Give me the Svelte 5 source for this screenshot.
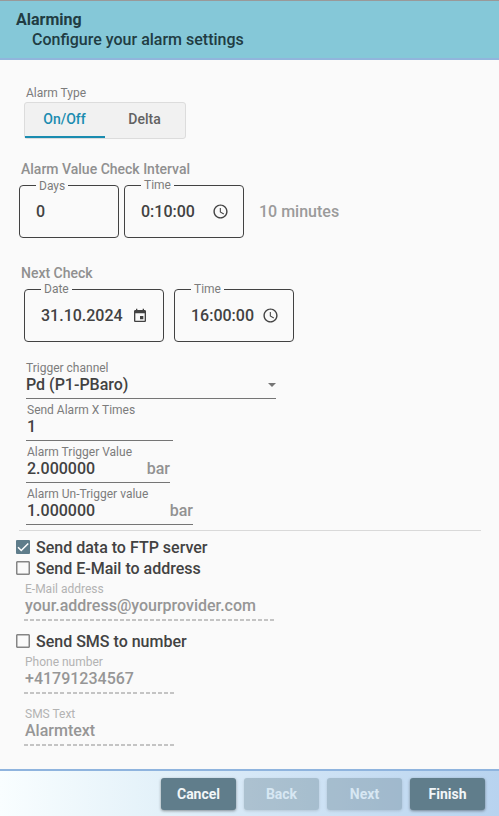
<script>
  const channelFields = [
    { label: 'Send Alarm X Times', value: '1', unit: '', size: 'short' },
    { label: 'Alarm Trigger Value', value: '2.000000', unit: 'bar', size: 'mid' },
    { label: 'Alarm Un-Trigger value', value: '1.000000', unit: 'bar', size: 'wide' }
  ];
  let alarmType = $state('On/Off');
  let ftp = $state(true);
  let mail = $state(false);
  let sms = $state(false);
</script>

{#snippet clock()}
  <svg class="icon clock" viewBox="0 0 24 24"><path d="M11.99 2C6.47 2 2 6.48 2 12s4.47 10 9.99 10C17.52 22 22 17.52 22 12S17.52 2 11.99 2zM12 20c-4.42 0-8-3.58-8-8s3.58-8 8-8 8 3.58 8 8-3.58 8-8 8zm.5-13H11v6l5.25 3.15.75-1.23-4.5-2.67z" /></svg>
{/snippet}

{#snippet check(on, text, toggle)}
  <button class="check" role="checkbox" aria-checked={on} onclick={toggle}>
    <span class="box" class:on>
      {#if on}<svg viewBox="0 0 24 24"><path fill="none" stroke="#fff" stroke-width="2.6" d="M3.5 12.5 9 18 21 6" /></svg>{/if}
    </span>
    <span class="text">{text}</span>
  </button>
{/snippet}

<div class="dialog">
  <header>
    <h1>Alarming</h1>
    <p>Configure your alarm settings</p>
  </header>

  <main>
    <div class="type-label">Alarm Type</div>
    <div class="tabs">
      {#each ['On/Off', 'Delta'] as name}
        <button class:active={alarmType === name} onclick={() => (alarmType = name)}>{name}</button>
      {/each}
    </div>

    <h2 class="interval">Alarm Value Check Interval</h2>
    <div class="row">
      <div class="outlined days"><span class="legend low">Days</span><span class="val">0</span></div>
      <div class="outlined time"><span class="legend">Time</span><span class="val">0:10:00</span>{@render clock()}</div>
      <span class="hint">10 minutes</span>
    </div>

    <h2 class="next">Next Check</h2>
    <div class="row dates">
      <div class="outlined date">
        <span class="legend">Date</span><span class="val">31.10.2024</span>
        <svg class="icon" viewBox="0 0 24 24"><path d="M17 12h-5v5h5v-5zM16 1v2H8V1H6v2H5c-1.11 0-1.99.9-1.99 2L3 19c0 1.1.89 2 2 2h14c1.1 0 2-.9 2-2V5c0-1.1-.9-2-2-2h-1V1h-2zm3 18H5V8h14v11z" /></svg>
      </div>
      <div class="outlined time"><span class="legend">Time</span><span class="val">16:00:00</span>{@render clock()}</div>
    </div>

    <div class="fields">
      <div class="field select">
        <span class="label">Trigger channel</span>
        <div class="line"><span>Pd (P1-PBaro)</span><i class="arrow"></i></div>
      </div>
      {#each channelFields as f}
        <div class="field num {f.size}">
          <span class="label">{f.label}</span>
          <div class="line"><span>{f.value}</span><span class="unit">{f.unit}</span></div>
        </div>
      {/each}
    </div>
    <div class="divider"></div>

    <div class="sends">
      {@render check(ftp, 'Send data to FTP server', () => (ftp = !ftp))}
      {@render check(mail, 'Send E-Mail to address', () => (mail = !mail))}
      <div class="field off email"><span class="label">E-Mail address</span><div class="line"><span>your.address@yourprovider.com</span></div></div>
      {@render check(sms, 'Send SMS to number', () => (sms = !sms))}
      <div class="field off phone"><span class="label">Phone number</span><div class="line"><span>+41791234567</span></div></div>
      <div class="field off sms"><span class="label">SMS Text</span><div class="line"><span>Alarmtext</span></div></div>
    </div>
  </main>

  <footer>
    <button>Cancel</button>
    <button disabled>Back</button>
    <button disabled>Next</button>
    <button>Finish</button>
  </footer>
</div>

<style>
  :global(body) { margin: 0; background: #fafafa; }
  .dialog, .dialog * { box-sizing: border-box; }
  .dialog {
    display: flex; flex-direction: column; width: 499px; height: 816px; overflow: hidden;
    background: #fafafa; color: #424242; font: 500 16px/20px Roboto, sans-serif;
  }
  button { font: inherit; letter-spacing: inherit; color: inherit; border: 0; margin: 0; padding: 0; background: none; }
  header { height: 60px; padding: 9px 16px 0; background: #85c8d8; border-top: 1px solid #999; border-bottom: 2px solid #91b5dc; color: #213c43; }
  h1, h2, p { margin: 0; font: inherit; }
  h1 { font-weight: 700; }
  p { padding-left: 16px; }

  main { height: 709px; padding-top: 25px; }
  .type-label { padding-left: 26px; height: 17px; font-size: 12px; font-weight: 400; line-height: 16px; color: #7c7c7c; }
  .tabs { display: flex; width: 162px; height: 37px; margin-left: 24px; border: 1px solid #dcdcdc; border-radius: 3px; background: #f1f1f1; }
  .tabs button { width: 80px; height: 35px; padding: 0 1px 1px 0; font-size: 14px; color: #626262; border-bottom: 2px solid transparent; }
  .tabs .active { color: #1a8cb0; border-bottom-color: #1a8cb0; }
  h2 { padding-left: 21px; font-size: 14px; color: #909090; }
  .interval { margin-top: 20px; height: 26px; }
  .row { display: flex; gap: 5px; margin-left: 19px; }
  .next { margin-top: 25px; height: 26px; }
  .dates { margin-left: 24px; gap: 10px; }
  .outlined { position: relative; display: flex; align-items: center; height: 53px; padding-left: 16px; border: 1px solid #424242; border-radius: 4px; }
  .days { width: 100px; }
  .time { width: 120px; }
  .date { width: 140px; }
  .legend { position: absolute; top: -8px; left: 16px; padding: 0 3px; background: #fafafa; font-size: 12px; font-weight: 400; line-height: 14px; color: #7c7c7c; }
  .low { top: -7px; }
  .icon { width: 16px; height: 16px; margin-left: auto; margin-right: 15px; fill: #424242; }
  .clock { width: 17px; height: 17px; margin-right: 14px; margin-bottom: 1px; }
  .hint { align-self: center; margin-left: 10px; color: #9b9b9b; }

  .fields { margin: 19px 0 0 26px; }
  .field { height: 42px; }
  .label { display: block; height: 16px; font-size: 12px; font-weight: 400; line-height: 14px; color: #7c7c7c; }
  .num .label, .num .line span:first-child { padding-left: 1px; }
  .line { display: flex; height: 22px; line-height: 16px; border-bottom: 1px solid #757575; }
  .unit { margin-left: auto; color: #929292; }
  .select { width: 250px; }
  .arrow { margin: 6px 0 0 auto; width: 8px; height: 4px; background: #757575; clip-path: polygon(0 0, 100% 0, 50% 100%); }
  .short { width: 147px; }
  .mid { width: 144px; }
  .wide { width: 167px; }
  .divider { width: 462px; height: 1px; margin: 1px 0 0 19px; background: #d9d9d9; }

  .sends { padding-top: 6px; }
  .check { display: flex; align-items: center; gap: 6px; height: 21px; margin-left: 16px; }
  .box { width: 14px; height: 14px; margin-bottom: 1px; border: 1.5px solid #858585; border-radius: 1px; box-shadow: inset 0 0 0 .5px #858585; }
  .box.on { border: 0; background: #5f7d8b; box-shadow: none; }
  .box svg { display: block; width: 14px; height: 14px; }
  .off { --dash: 6px; margin: 3px 0 0 24px; width: 250px; }
  .off .label { color: #b3b3b3; padding-left: 1px; height: 16px; }
  .off .line { height: 23px; border: 0; color: #969696; padding-left: 1px;
    background: repeating-linear-gradient(90deg, #c4c4c4 0 4px, transparent 4px var(--dash)) left bottom / 100% 2px no-repeat; }
  .email { height: 49px; }
  .phone, .sms { --dash: 6.083px; width: 150px; }
  .phone { height: 49px; }

  footer { display: flex; justify-content: flex-end; gap: 8px; height: 47px; padding: 7px 14px 0 0; border-top: 2px solid #8fb4de;
    background: linear-gradient(90deg, #f9feff, #e3f1f9 32%, #d6e8f7 50%, #b8d3ef); }
  footer button { width: 75px; height: 32px; border-radius: 3px; background: #607d8b; color: #f2f6f8; font-size: 14px; font-weight: 700; box-shadow: 0 1px 3px #0006; }
  footer button:disabled { background: rgb(96 125 139 / .36); color: #d7e7f3; box-shadow: 0 1px 3px #0002; }
</style>
